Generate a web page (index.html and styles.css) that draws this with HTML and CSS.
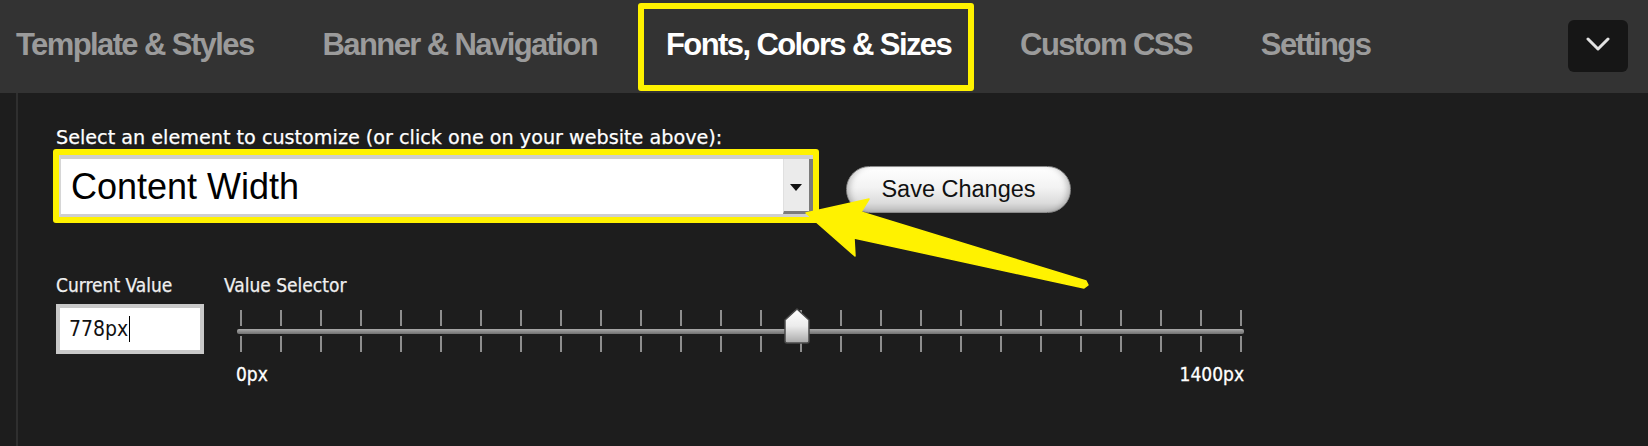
FILE: index.html
```html
<!DOCTYPE html>
<html>
<head>
<meta charset="utf-8">
<title>Customize</title>
<link rel="stylesheet" href="styles.css">
</head>
<body>
<header class="topbar">
  <nav class="tabs">
    <a class="tab">Template &amp; Styles</a>
    <a class="tab">Banner &amp; Navigation</a>
    <a class="tab tab-active">Fonts, Colors &amp; Sizes</a>
    <a class="tab">Custom CSS</a>
    <a class="tab">Settings</a>
  </nav>
  <button class="menu-btn" aria-label="More">
    <svg width="24" height="14" viewBox="0 0 24 14"><polyline points="2,2 12,12 22,2" fill="none" stroke="#e2e2e2" stroke-width="3" stroke-linecap="round" stroke-linejoin="round"/></svg>
  </button>
</header>

<main class="panel">
  <div class="field-label">Select an element to customize (or click one on your website above):</div>
  <div class="select-row">
    <div class="select-highlight">
      <div class="select">
        <span class="select-value">Content Width</span>
        <span class="select-arrow"></span>
      </div>
    </div>
    <button class="save-btn">Save Changes</button>
  </div>

  <div class="value-row">
    <div class="current">
      <div class="small-label">Current Value</div>
      <div class="value-input">778px<span class="caret"></span></div>
    </div>
    <div class="selector">
      <div class="small-label">Value Selector</div>
      <div class="slider">
        <div class="ticks ticks-upper">
          <span></span><span></span><span></span><span></span><span></span><span></span><span></span><span></span><span></span><span></span><span></span><span></span><span></span><span></span><span></span><span></span><span></span><span></span><span></span><span></span><span></span><span></span><span></span><span></span><span></span><span></span>
        </div>
        <div class="track"></div>
        <div class="ticks ticks-lower">
          <span></span><span></span><span></span><span></span><span></span><span></span><span></span><span></span><span></span><span></span><span></span><span></span><span></span><span></span><span></span><span></span><span></span><span></span><span></span><span></span><span></span><span></span><span></span><span></span><span></span><span></span>
        </div>
        <div class="thumb" style="left:559px">
          <svg width="28" height="36" viewBox="0 0 28 36">
            <defs>
              <linearGradient id="thumbGrad" x1="0" y1="0" x2="0" y2="1">
                <stop offset="0" stop-color="#ffffff"/>
                <stop offset="0.5" stop-color="#ececec"/>
                <stop offset="1" stop-color="#a8a8a8"/>
              </linearGradient>
            </defs>
            <path d="M14 1 L26 12 L26 33 Q26 35 24 35 L4 35 Q2 35 2 33 L2 12 Z" fill="url(#thumbGrad)" stroke="#4a4a4a" stroke-width="1.5" stroke-linejoin="round"/>
          </svg>
        </div>
        <div class="scale"><span>0px</span><span>1400px</span></div>
      </div>
    </div>
  </div>
</main>

<svg class="callout-arrow" width="1648" height="446" viewBox="0 0 1648 446">
  <polygon points="806,213 869,199 861,212 1086,281 1088,285 1084,288 854,238 855,256" fill="#fff200" stroke="#fff200" stroke-width="1.5" stroke-linejoin="round"/>
</svg>
</body>
</html>
```

FILE: styles.css
```css
* { box-sizing: border-box; }
html, body { margin: 0; padding: 0; }
body {
  background: #1d1d1d;
  width: 1648px;
  height: 446px;
  overflow: hidden;
  position: relative;
  font-family: "DejaVu Sans Condensed", "DejaVu Sans", sans-serif;
  font-stretch: condensed;
}

/* top bar */
.topbar {
  height: 93px;
  background: #333333;
  display: flex;
  align-items: flex-start;
  padding-left: 16px;
}
.tabs {
  display: flex;
  gap: 69px;
  padding-top: 3px;
}
.tab {
  height: 88px;
  padding-top: 26px;
  font-family: "Liberation Sans", Arial, sans-serif;
  font-stretch: normal;
  font-weight: 700;
  font-size: 31px;
  line-height: 31px;
  letter-spacing: -1.6px;
  color: #9b9b9b;
  white-space: nowrap;
  cursor: pointer;
}
.tab-active {
  color: #ffffff;
  border: 6px solid #fff200;
  border-radius: 3px;
  padding: 20px 17px 0 22px;
  margin: 0 -23px 0 -28px;
}
.menu-btn {
  margin-left: auto;
  margin-right: 20px;
  margin-top: 20px;
  width: 60px;
  height: 52px;
  background: #161616;
  border: none;
  border-radius: 6px;
  display: flex;
  align-items: center;
  justify-content: center;
  padding: 0 0 4px 0;
}

/* panel */
.panel {
  margin-left: 16px;
  border-left: 2px solid #2f2f2f;
  height: 353px;
  padding: 34px 0 0 35px;
}
.field-label {
  margin-left: 3px;
  font-family: "DejaVu Sans", sans-serif;
  font-stretch: normal;
  font-size: 19.2px;
  line-height: 22px;
  color: #ffffff;
  white-space: nowrap;
  -webkit-text-stroke: 0.25px #ffffff;
}
.select-row {
  display: flex;
  align-items: flex-start;
  gap: 27px;
}
.select-highlight {
  width: 766px;
  height: 74px;
  border: 6px solid #fff200;
  border-radius: 3px;
}
.select {
  height: 62px;
  display: flex;
  align-items: stretch;
  background: #ffffff;
  border-top: 4px solid #cfcfcf;
  border-bottom: 3px solid #cfcfcf;
  border-left: 2px solid #d6d6d6;
}
.select-value {
  flex: 1;
  align-self: center;
  padding-left: 10px;
  font-family: "Liberation Sans", Arial, sans-serif;
  font-stretch: normal;
  font-size: 36px;
  line-height: 36px;
  color: #000;
}
.select-arrow {
  position: relative;
  width: 30px;
  background: #ebebeb;
  border-left: 1px solid #e0e0e0;
  border-right: 4px solid #7b7b7b;
  border-bottom: 3px solid #7b7b7b;
}
.select-arrow::after {
  content: "";
  position: absolute;
  left: 6px;
  top: 25px;
  border-left: 6px solid transparent;
  border-right: 6px solid transparent;
  border-top: 7px solid #111;
}
.save-btn {
  margin-top: 17px;
  width: 225px;
  height: 47px;
  border-radius: 24px;
  border: 1px solid #8a8a8a;
  background: linear-gradient(#ffffff 0%, #f3f3f3 45%, #dcdcdc 80%, #b8b8b8 100%);
  box-shadow: inset 6px 0 6px -4px rgba(0,0,0,0.25), inset -6px 0 6px -4px rgba(0,0,0,0.25);
  font-family: "Liberation Sans", Arial, sans-serif;
  font-size: 23.5px;
  color: #111;
  padding: 0;
}

/* value row */
.value-row {
  display: flex;
  margin-top: 51px;
  gap: 20px;
}
.current {
  width: 151px;
  padding-left: 3px;
}
.small-label {
  font-size: 19px;
  line-height: 22px;
  color: #f0f0f0;
  white-space: nowrap;
  -webkit-text-stroke: 0.25px #f0f0f0;
}
.value-input {
  margin-top: 8px;
  width: 148px;
  height: 50px;
  border: 4px solid #c9c9c9;
  background: #ffffff;
  padding-left: 9px;
  font-size: 21px;
  line-height: 40px;
  color: #111;
  display: flex;
  align-items: center;
}
.caret {
  display: inline-block;
  width: 1px;
  height: 26px;
  background: #000;
  margin-left: 1px;
}
.selector {
  width: 1020px;
}
.slider {
  position: relative;
  margin-top: 8px;
  padding: 6px 0 0 13px;
}
.ticks {
  display: flex;
  justify-content: space-between;
  width: 1002px;
  margin-left: 3px;
  height: 16px;
}
.ticks span {
  width: 2px;
  height: 16px;
  background: #8e8e8e;
}
.ticks-lower { margin-top: 2px; }
.track {
  margin-top: 3px;
  width: 1007px;
  height: 5px;
  border-radius: 2px;
  background: linear-gradient(#aaaaaa, #707070);
}
.thumb {
  position: absolute;
  top: 4px;
  width: 28px;
  height: 36px;
}
.thumb svg { display: block; }
.scale {
  display: flex;
  justify-content: space-between;
  width: 1008px;
  margin-left: -1px;
  margin-top: 11px;
  font-size: 19px;
  line-height: 22px;
  color: #ffffff;
  -webkit-text-stroke: 0.3px #ffffff;
}

/* annotation overlay */
.callout-arrow {
  position: absolute;
  left: 0;
  top: 0;
  pointer-events: none;
}
```
